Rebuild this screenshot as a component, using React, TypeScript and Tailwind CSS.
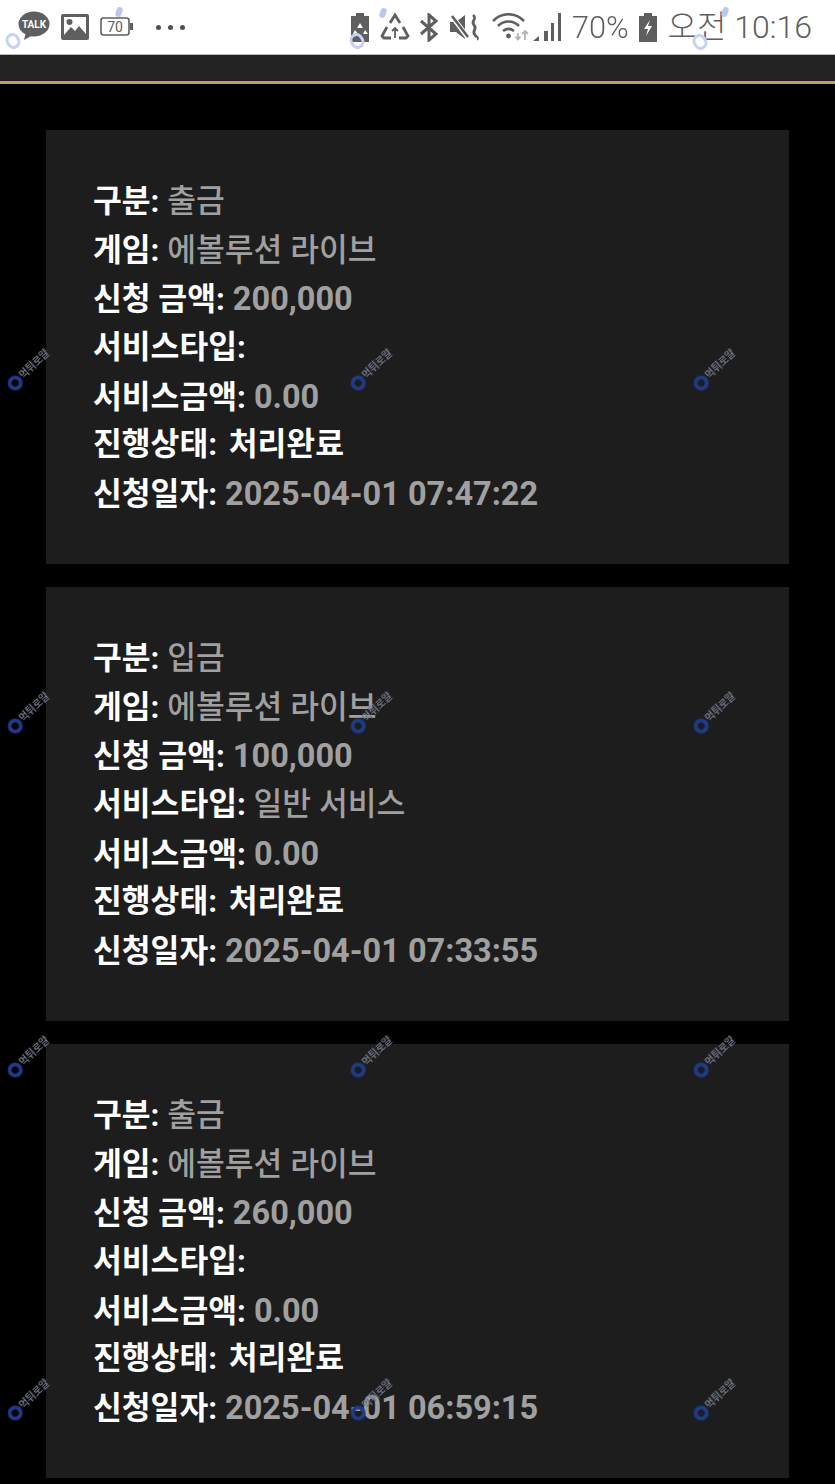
import React from "react";

const FONT = "font-['Roboto','Noto_Sans_CJK_KR',sans-serif]";

type Row = { label: string; value?: string; white?: boolean };

const makeRows = (kind: string, amount: string, service: string, date: string): Row[] => [
  { label: "구분:", value: kind },
  { label: "게임:", value: "에볼루션 라이브" },
  { label: "신청 금액:", value: amount },
  { label: "서비스타입:", value: service },
  { label: "서비스금액:", value: "0.00" },
  { label: "진행상태:", value: "처리완료", white: true },
  { label: "신청일자:", value: date },
];

const cards = [
  makeRows("출금", "200,000", "", "2025-04-01 07:47:22"),
  makeRows("입금", "100,000", "일반 서비스", "2025-04-01 07:33:55"),
  makeRows("출금", "260,000", "", "2025-04-01 06:59:15"),
];

function valueClass(r: Row) {
  if (r.white) return "font-bold text-white ml-[4px]";
  if (/^[0-9]/.test(r.value ?? "")) return "font-bold text-[#a0a0a0] text-[32.5px]";
  return "font-medium text-[#a0a0a0]";
}

function Card({ rows }: { rows: Row[] }) {
  return (
    <div className="bg-[#1d1d1d] h-[434px] px-[47px] pt-[48px]">
      {rows.map((r) => (
        <p key={r.label} className="h-[48.7px] leading-[48.7px] text-[31.3px] whitespace-pre">
          <span className="font-bold text-white">{r.label}</span>
          {r.value ? <span className={valueClass(r)}> {r.value}</span> : null}
        </p>
      ))}
    </div>
  );
}

function Watermark({ x, y }: { x: number; y: number }) {
  return (
    <div className="absolute w-[55px] h-[16px] flex items-center gap-[1px] -rotate-[43deg] blur-[0.6px]" style={{ left: x, top: y }}>
      <span className="w-[15px] h-[15px] rounded-full border-[4px] border-[#1f3a86] shrink-0" />
      <span className="text-[10px] leading-none font-bold text-[#6f7585] whitespace-nowrap">먹튀로얄</span>
    </div>
  );
}

function TopMark({ x, y }: { x: number; y: number }) {
  return <span className="absolute w-[14px] h-[16px] rounded-full border-[3px] border-[#c6d2f3] -rotate-[30deg]" style={{ left: x, top: y }} />;
}

function Dot({ x, y }: { x: number; y: number }) {
  return <span className="absolute w-[6px] h-[10px] rounded-full bg-[#b9c8ef] rotate-[20deg]" style={{ left: x, top: y }} />;
}

const G = "#5f5f5f";

function StatusBar() {
  return (
    <div className="relative h-[55px] bg-white border-b border-[#bdbdbd] flex items-center text-[#5f5f5f]">
      <div className="flex items-center pl-[17px] h-full">
        <svg width="33" height="32" viewBox="0 0 33 32">
          <ellipse cx="17" cy="13" rx="15.5" ry="12.5" fill={G} />
          <path d="M9 21 L7 29 L16 24Z" fill={G} />
          <text x="17" y="17" textAnchor="middle" fontSize="10" fontWeight="700" fill="#fff" fontFamily="Roboto">TALK</text>
        </svg>
        <svg width="28" height="27" viewBox="0 0 28 27" className="ml-[11px]">
          <rect x="0" y="0" width="28" height="26" rx="2" fill={G} />
          <rect x="3" y="3" width="22" height="20" fill="#fff" />
          <circle cx="8.500" cy="8" r="3" fill={G} />
          <path d="M3 21 L10 13 L14 17 L18 12 L25 20 L25 23 L3 23Z" fill={G} />
        </svg>
        <svg width="34" height="20" viewBox="0 0 34 20" className="ml-[11px]">
          <rect x="1" y="1" width="28" height="17" rx="2.500" fill="none" stroke={G} strokeWidth="1.6" />
          <rect x="30" y="6" width="3" height="7" fill={G} />
          <text x="15" y="15" textAnchor="middle" fontSize="14" fill={G} fontFamily="Roboto">70</text>
        </svg>
        <div className="flex gap-[7px] ml-[22px]">
          <span className="w-[5px] h-[5px] rounded-full bg-[#505050]" />
          <span className="w-[5px] h-[5px] rounded-full bg-[#505050]" />
          <span className="w-[5px] h-[5px] rounded-full bg-[#505050]" />
        </div>
      </div>
      <div className="ml-auto flex items-center h-full pr-[23px]">
        <svg width="20" height="29" viewBox="0 0 20 29" className="mr-[10px]">
          <path d="M6 0h8v3h5v26H1V3h5Z" fill={G} />
          <path d="M10 10l3 5h-6ZM5 17l3 4H3ZM15 17l3 4h-5Z" fill="#fff" />
        </svg>
        <svg width="30" height="28" viewBox="0 0 30 28" fill="none" stroke={G} strokeWidth="2.800" className="mr-[9px]">
          <path d="M10 10l5-8 5 8M7 14L2 23l2 2h7M23 14l5 9-2 2h-7" />
          <path d="M15 15v10M12 18l3-3 3 3" strokeWidth="1.800" />
        </svg>
        <svg width="20" height="29" viewBox="0 0 20 29" fill="none" stroke={G} strokeWidth="3" className="mr-[11px]">
          <path d="M2 8l15 13-7 6V2l7 6L2 21" />
        </svg>
        <svg width="31" height="28" viewBox="0 0 31 28" className="mr-[11px]">
          <path d="M0 9h6l9-7v24l-9-7H0Z" fill={G} />
          <path d="M1 2l18 24" stroke="#fff" strokeWidth="5" />
          <path d="M2 3l16 21" stroke={G} strokeWidth="2.600" />
          <path d="M23 2c5 4-3 6 1 10s-3 6 1 10 2 4 2 4" fill="none" stroke={G} strokeWidth="2.800" />
        </svg>
        <svg width="38" height="28" viewBox="0 0 38 28" fill="none" className="mr-[3px]">
          <path d="M1 8c9-9 22-9 31 0" stroke={G} strokeWidth="2.600" />
          <path d="M6 13c6-6 15-6 21 0" stroke={G} strokeWidth="2.600" />
          <path d="M11 18c4-3 7-3 11 0" stroke={G} strokeWidth="2.600" />
          <circle cx="16.500" cy="23" r="2.400" fill={G} />
          <path d="M26 27v-7M23.500 23.500l2.500 3 2.500-3M33 27v-9M30 21l3-3 3 3" stroke="#b5b5b5" strokeWidth="1.800" />
        </svg>
        <svg width="28" height="30" viewBox="0 0 28 30" className="mr-[11px]">
          <path d="M0 29 L6 24 V29Z" fill={G} />
          <rect x="11" y="19" width="4" height="10" fill={G} />
          <rect x="18" y="11" width="3" height="18" fill={G} />
          <rect x="25" y="1" width="3" height="28" fill={G} />
        </svg>
        <span className="text-[32px] leading-none font-light font-['Roboto',sans-serif] scale-x-[0.96] origin-left w-[56px]">70%</span>
        <svg width="20" height="29" viewBox="0 0 20 29" className="ml-[10px] mr-[10px]">
          <path d="M6 0h8v3h5v26H1V3h5Z" fill={G} />
          <path d="M12 7L6 16h4l-2 7 6-10h-4Z" fill="#fff" />
        </svg>
        <span className="text-[32px] leading-none font-light font-['Roboto','Noto_Sans_CJK_KR',sans-serif]">오전 10:16</span>
      </div>
      <Dot x={116} y={7} />
      <TopMark x={6} y={33} />
      <TopMark x={350} y={33} />
      <Dot x={380} y={8} />
      <Dot x={722} y={7} />
      <TopMark x={693} y={34} />
    </div>
  );
}

export default function App() {
  const xs = [2, 345, 688];
  const ys = [361, 704, 1048, 1391];
  return (
    <div className={`relative w-[835px] h-[1484px] bg-black overflow-hidden ${FONT}`}>
      <StatusBar />
      <div className="h-[29px] bg-[#222222] border-b-[3px] border-[#bba368]" />
      <div className="flex flex-col gap-[23px] px-[46px] pt-[46px]">
        {cards.map((rows, i) => (
          <Card key={i} rows={rows} />
        ))}
      </div>
      {ys.flatMap((y) => xs.map((x) => <Watermark key={`${x}-${y}`} x={x} y={y} />))}
    </div>
  );
}
